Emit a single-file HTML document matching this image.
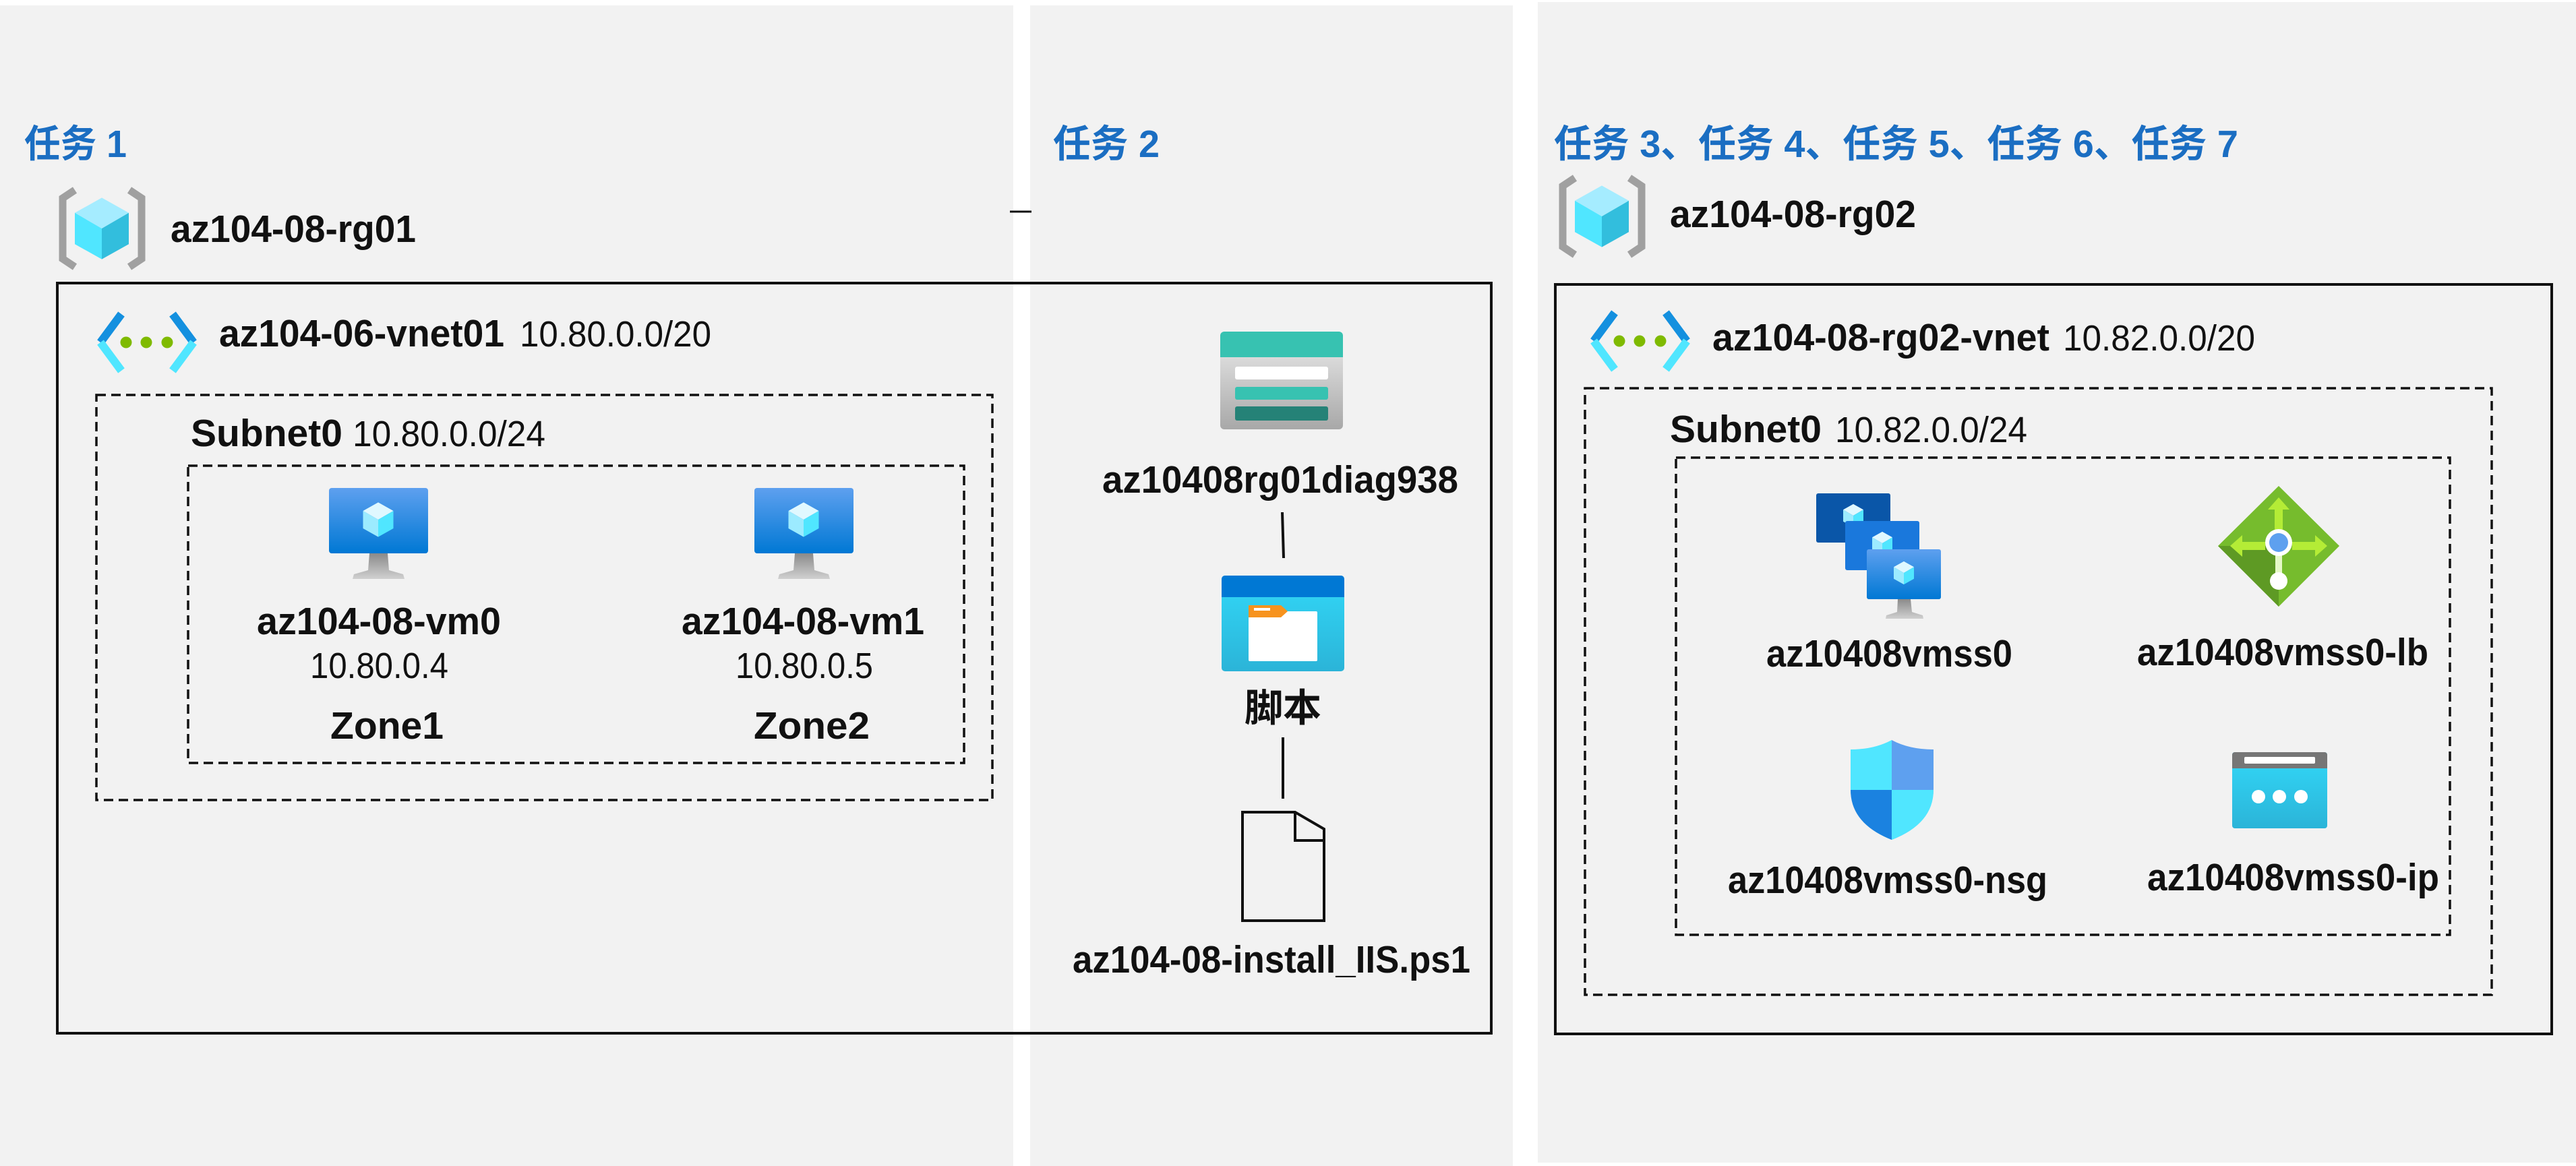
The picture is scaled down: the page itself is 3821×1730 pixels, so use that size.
<!DOCTYPE html>
<html><head><meta charset="utf-8"><style>
html,body{margin:0;padding:0;background:#fff;width:3821px;height:1730px;overflow:hidden}
svg{display:block}
text{font-family:"Liberation Sans","Noto Sans CJK SC",sans-serif}
.b{font-weight:bold;font-size:57px;fill:#111}
.n{font-size:54px;fill:#111}
.t{font-weight:bold;font-size:57px;fill:#1b6ec2}
</style></head><body>
<svg width="3821" height="1730" viewBox="0 0 3821 1730" xmlns="http://www.w3.org/2000/svg">
<defs>
<linearGradient id="vmg" x1="0" y1="0" x2="0" y2="1"><stop offset="0" stop-color="#5ea0ef"/><stop offset="1" stop-color="#0078d4"/></linearGradient>
<linearGradient id="stg" x1="0" y1="0" x2="0" y2="1"><stop offset="0" stop-color="#ececec"/><stop offset="1" stop-color="#a8a8a8"/></linearGradient>
<linearGradient id="fdg" x1="0" y1="0" x2="0" y2="1"><stop offset="0" stop-color="#32d8f8"/><stop offset="1" stop-color="#2bb4d8"/></linearGradient>
<linearGradient id="stand" x1="0" y1="0" x2="0" y2="1"><stop offset="0" stop-color="#8a8a8a"/><stop offset="1" stop-color="#d0d0d0"/></linearGradient>
<g id="cube">
<path d="M0,-57 L50,-29 L0,0 L-50,-29Z" fill="#a5ecff"/>
<path d="M-50,-29 L0,0 L0,57 L-50,29Z" fill="#50e6ff"/>
<path d="M50,-29 L0,0 L0,57 L50,29Z" fill="#32bedd"/>
</g>
<g id="cubew">
<path d="M0,-57 L50,-29 L0,0 L-50,-29Z" fill="#e0f8ff"/>
<path d="M-50,-29 L0,0 L0,57 L-50,29Z" fill="#9cebff"/>
<path d="M50,-29 L0,0 L0,57 L50,29Z" fill="#50e6ff"/>
</g>
<g id="rg">
<path d="M24,4 L6,16 L6,106 L24,118" fill="none" stroke="#a0a0a0" stroke-width="11"/>
<path d="M105,4 L123,16 L123,106 L105,118" fill="none" stroke="#a0a0a0" stroke-width="11"/>
<use href="#cube" transform="translate(64,61) scale(0.8)"/>
</g>
<g id="vnet">
<path d="M37,2 L6,44" stroke="#1490df" stroke-width="12" fill="none"/>
<path d="M6,44 L37,86" stroke="#50e6ff" stroke-width="12" fill="none"/>
<path d="M113,2 L144,44" stroke="#1490df" stroke-width="12" fill="none"/>
<path d="M144,44 L113,86" stroke="#50e6ff" stroke-width="12" fill="none"/>
<circle cx="44" cy="44" r="8.5" fill="#7fba00"/><circle cx="74" cy="44" r="8.5" fill="#7fba00"/><circle cx="105" cy="44" r="8.5" fill="#7fba00"/>
</g>
<g id="vm">
<rect x="0" y="0" width="147" height="97" rx="4" fill="url(#vmg)"/>
<path d="M60,97 L87,97 L89,122 L110,128 L112,135 L35,135 L37,128 L58,122Z" fill="url(#stand)"/>
<use href="#cubew" transform="translate(73,47) scale(0.45)"/>
</g>
</defs>

<rect x="0" y="8" width="1503" height="1722" fill="#f2f2f2"/>
<rect x="1528" y="8" width="716" height="1722" fill="#f2f2f2"/>
<rect x="2281" y="3" width="1540" height="1722" fill="#f2f2f2"/>

<text class="t" x="36" y="233" textLength="152" lengthAdjust="spacingAndGlyphs">任务 1</text>
<text class="t" x="1562" y="233" textLength="158" lengthAdjust="spacingAndGlyphs">任务 2</text>
<text class="t" x="2305" y="233" textLength="1015" lengthAdjust="spacingAndGlyphs">任务 3、任务 4、任务 5、任务 6、任务 7</text>
<line x1="1498" y1="314" x2="1530" y2="314" stroke="#111" stroke-width="3"/>

<use href="#rg" x="87" y="278"/>
<text class="b" x="253" y="359" textLength="364" lengthAdjust="spacingAndGlyphs">az104-08-rg01</text>
<rect x="85" y="420" width="2127" height="1113" fill="none" stroke="#111" stroke-width="4"/>
<use href="#vnet" x="143" y="464"/>
<text class="b" x="325" y="514" textLength="423" lengthAdjust="spacingAndGlyphs">az104-06-vnet01</text>
<text class="n" x="771" y="514" textLength="284" lengthAdjust="spacingAndGlyphs">10.80.0.0/20</text>
<rect x="143" y="586" width="1329" height="601" fill="none" stroke="#111" stroke-width="3.5" stroke-dasharray="14 8"/>
<text class="b" x="283" y="662" textLength="225" lengthAdjust="spacingAndGlyphs">Subnet0</text>
<text class="n" x="523" y="662" textLength="286" lengthAdjust="spacingAndGlyphs">10.80.0.0/24</text>
<rect x="279" y="691" width="1151" height="441" fill="none" stroke="#111" stroke-width="3.5" stroke-dasharray="14 8"/>
<use href="#vm" x="488" y="724"/>
<use href="#vm" x="1119" y="724"/>
<text class="b" x="381" y="941" textLength="362" lengthAdjust="spacingAndGlyphs">az104-08-vm0</text>
<text class="b" x="1011" y="941" textLength="360" lengthAdjust="spacingAndGlyphs">az104-08-vm1</text>
<text class="n" x="460" y="1006" textLength="205" lengthAdjust="spacingAndGlyphs">10.80.0.4</text>
<text class="n" x="1091" y="1006" textLength="204" lengthAdjust="spacingAndGlyphs">10.80.0.5</text>
<text class="b" x="490" y="1096" textLength="168" lengthAdjust="spacingAndGlyphs">Zone1</text>
<text class="b" x="1118" y="1096" textLength="172" lengthAdjust="spacingAndGlyphs">Zone2</text>

<rect x="1810" y="492" width="182" height="145" rx="6" fill="url(#stg)"/>
<path d="M1816,492 H1986 a6,6 0 0 1 6,6 V530 H1810 V498 a6,6 0 0 1 6,-6Z" fill="#37c2b1"/>
<rect x="1832" y="544" width="138" height="19" rx="3" fill="#fff"/>
<rect x="1832" y="574" width="138" height="19" rx="3" fill="#37c2b1"/>
<rect x="1832" y="603" width="138" height="21" rx="3" fill="#258277"/>
<text class="b" x="1635" y="731" textLength="528" lengthAdjust="spacingAndGlyphs">az10408rg01diag938</text>
<line x1="1902" y1="760" x2="1904" y2="828" stroke="#111" stroke-width="4"/>
<rect x="1812" y="854" width="182" height="142" rx="5" fill="url(#fdg)"/>
<path d="M1817,854 H1989 a5,5 0 0 1 5,5 V886 H1812 V859 a5,5 0 0 1 5,-5Z" fill="#0078d4"/>
<rect x="1852" y="907" width="102" height="74" rx="2" fill="#fff"/>
<path d="M1852,898 H1900 L1910,907 L1900,916 H1852Z" fill="#f7931e"/>
<rect x="1860" y="902" width="24" height="4" fill="#fff"/>
<text class="b" x="1903" y="1070" text-anchor="middle" font-size="58">脚本</text>
<line x1="1903" y1="1094" x2="1903" y2="1185" stroke="#111" stroke-width="4"/>
<path d="M1843,1205 H1921 L1964,1230 V1366 H1843Z M1921,1205 V1247 H1964" fill="none" stroke="#111" stroke-width="4"/>
<text class="b" x="1591" y="1443" textLength="590" lengthAdjust="spacingAndGlyphs">az104-08-install_IIS.ps1</text>

<use href="#rg" x="2312" y="260"/>
<text class="b" x="2477" y="337" textLength="365" lengthAdjust="spacingAndGlyphs">az104-08-rg02</text>
<rect x="2307" y="422" width="1478" height="1112" fill="none" stroke="#111" stroke-width="4"/>
<use href="#vnet" x="2358" y="462"/>
<text class="b" x="2540" y="520" textLength="500" lengthAdjust="spacingAndGlyphs">az104-08-rg02-vnet</text>
<text class="n" x="3060" y="520" textLength="285" lengthAdjust="spacingAndGlyphs">10.82.0.0/20</text>
<rect x="2351" y="576" width="1345" height="900" fill="none" stroke="#111" stroke-width="3.5" stroke-dasharray="14 8"/>
<text class="b" x="2477" y="656" textLength="225" lengthAdjust="spacingAndGlyphs">Subnet0</text>
<text class="n" x="2722" y="656" textLength="285" lengthAdjust="spacingAndGlyphs">10.82.0.0/24</text>
<rect x="2486" y="679" width="1148" height="708" fill="none" stroke="#111" stroke-width="3.5" stroke-dasharray="14 8"/>

<rect x="2694" y="732" width="110" height="73" rx="3" fill="#0a56a8"/>
<use href="#cubew" transform="translate(2749,765) scale(0.3)"/>
<rect x="2737" y="773" width="110" height="73" rx="3" fill="#1a78dc"/>
<use href="#cubew" transform="translate(2792,806) scale(0.3)"/>
<rect x="2769" y="815" width="110" height="74" rx="3" fill="url(#vmg)"/>
<path d="M2815,889 H2834 L2836,908 L2852,913 L2853,918 H2797 L2798,913 L2814,908Z" fill="url(#stand)"/>
<use href="#cubew" transform="translate(2824,850) scale(0.3)"/>
<text class="b" x="2620" y="989" textLength="365" lengthAdjust="spacingAndGlyphs">az10408vmss0</text>

<path d="M3380,721 L3470,810 L3380,900 L3290,810Z" fill="#76bc2d"/>
<path d="M3380,900 L3290,810 L3380,810Z" fill="#5e9a24"/>
<path d="M3380,738 L3396,756 H3386 V790 H3374 V756 H3364Z" fill="#b4ec36"/>
<path d="M3308,810 L3326,794 V804 H3360 V816 H3326 V826Z" fill="#b4ec36"/>
<path d="M3452,810 L3434,794 V804 H3400 V816 H3434 V826Z" fill="#b4ec36"/>
<rect x="3375" y="815" width="10" height="35" fill="#e6f8c8"/>
<circle cx="3380" cy="805" r="20" fill="#fff"/>
<circle cx="3380" cy="805" r="14" fill="#5ea0ef"/>
<circle cx="3380" cy="862" r="13" fill="#fff"/>
<text class="b" x="3170" y="987" textLength="432" lengthAdjust="spacingAndGlyphs">az10408vmss0-lb</text>

<path d="M2806,1098 Q2780,1112 2745,1112 V1170 Q2745,1222 2806,1246Z" fill="#50e6ff"/>
<path d="M2806,1098 Q2832,1112 2868,1112 V1170 Q2868,1222 2806,1246Z" fill="#5ea0ef"/>
<path d="M2745,1172 H2806 V1246 Q2745,1222 2745,1172Z" fill="#1b82e0"/>
<path d="M2868,1172 H2806 V1246 Q2868,1222 2868,1172Z" fill="#50e6ff"/>
<text class="b" x="2563" y="1325" textLength="474" lengthAdjust="spacingAndGlyphs">az10408vmss0-nsg</text>

<rect x="3311" y="1116" width="141" height="113" rx="4" fill="url(#fdg)"/>
<path d="M3315,1116 H3448 a4,4 0 0 1 4,4 V1140 H3311 V1120 a4,4 0 0 1 4,-4Z" fill="#767676"/>
<rect x="3329" y="1123" width="105" height="10" rx="2" fill="#fff"/>
<circle cx="3350" cy="1182" r="10" fill="#fff"/><circle cx="3381" cy="1182" r="10" fill="#fff"/><circle cx="3413" cy="1182" r="10" fill="#fff"/>
<text class="b" x="3185" y="1321" textLength="433" lengthAdjust="spacingAndGlyphs">az10408vmss0-ip</text>
</svg>
</body></html>
